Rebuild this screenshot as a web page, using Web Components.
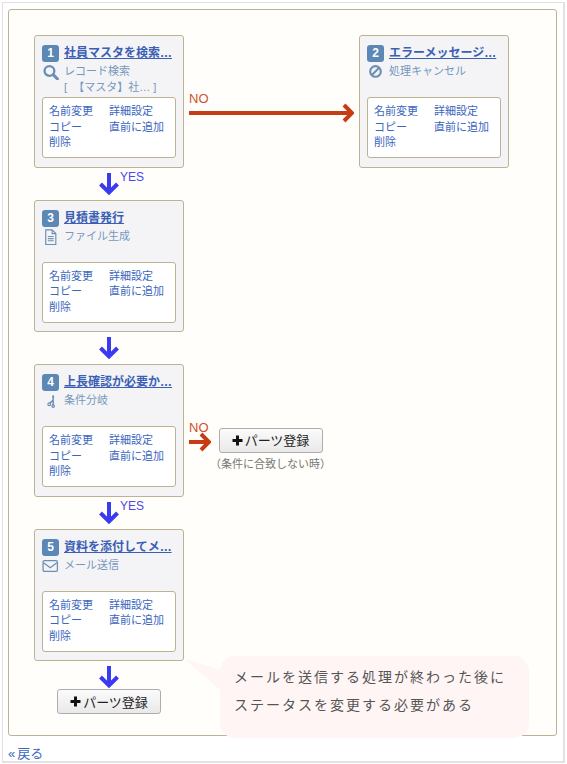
<!DOCTYPE html>
<html lang="ja">
<head>
<meta charset="utf-8">
<style>
html,body{margin:0;padding:0;background:#fff}
body{font-family:"Liberation Sans","Noto Sans CJK JP",sans-serif;font-size:12px;color:#333}
</style>
</head>
<body>
<flow-page>
  <flow-row>
    <flow-card num="1" icon="search">
      <span slot="title">社員マスタを検索…</span>
      <span slot="kind">レコード検索</span>
      <span slot="detail">[&nbsp;&nbsp;【マスタ】社…&nbsp;]</span>
    </flow-card>
    <flow-branch wide></flow-branch>
    <flow-card num="2" icon="ban">
      <span slot="title">エラーメッセージ…</span>
      <span slot="kind">処理キャンセル</span>
    </flow-card>
  </flow-row>
  <flow-down label="YES"></flow-down>
  <flow-row>
    <flow-card num="3" icon="file">
      <span slot="title">見積書発行</span>
      <span slot="kind">ファイル生成</span>
    </flow-card>
  </flow-row>
  <flow-down></flow-down>
  <flow-row>
    <flow-card num="4" icon="fork">
      <span slot="title">上長確認が必要か…</span>
      <span slot="kind">条件分岐</span>
    </flow-card>
    <flow-branch>
      <div class="else"><add-button></add-button><span>（条件に合致しない時）</span></div>
    </flow-branch>
  </flow-row>
  <flow-down label="YES"></flow-down>
  <flow-row>
    <flow-card num="5" icon="mail">
      <span slot="title">資料を添付してメ…</span>
      <span slot="kind">メール送信</span>
    </flow-card>
  </flow-row>
  <flow-down></flow-down>
  <flow-row class="last"><add-button></add-button></flow-row>
  <flow-note>メールを送信する処理が終わった後に<br>ステータスを変更する必要がある</flow-note>
  <a slot="back" href="#"><span style="margin-right:2px">«</span>戻る</a>
</flow-page>

<script>
const icons = {
  search: '<circle cx="7" cy="6.5" r="4.6" fill="none" stroke="#6b8fb5" stroke-width="2.2"/><path d="M10.5 10l4 4" stroke="#6b8fb5" stroke-width="2.8" stroke-linecap="round"/>',
  ban: '<circle cx="8" cy="7" r="5" fill="none" stroke="#6b8fb5" stroke-width="2"/><path d="M4.6 10.4l6.8-6.8" stroke="#6b8fb5" stroke-width="2"/>',
  file: '<path d="M3.5 .8h6l3.5 3.5v10.4h-9.5z" fill="none" stroke="#6b8fb5" stroke-width="1.1"/><path d="M9.5 .8v3.5h3.5M5.5 7h5.5M5.5 9h5.5M5.5 11h5.5" fill="none" stroke="#6b8fb5" stroke-width="1"/>',
  fork: '<path d="M10.5 3.5v8M10.5 6.5L7.5 9.5" fill="none" stroke="#6b8fb5" stroke-width="1.4"/><circle cx="10.5" cy="3.2" r="1" fill="#6b8fb5"/><circle cx="6.8" cy="10.5" r="1.3" fill="none" stroke="#6b8fb5" stroke-width="1.1"/><circle cx="10.5" cy="12.3" r="1.2" fill="none" stroke="#6b8fb5" stroke-width="1.1"/>',
  mail: '<rect x="1" y="2.5" width="13.5" height="10" rx="1.2" fill="none" stroke="#6b8fb5" stroke-width="1.2"/><path d="M1.5 4.5l6.2 4.6 6.3-4.6" fill="none" stroke="#6b8fb5" stroke-width="1.2"/>'
}

class FlowPage extends HTMLElement {
  constructor() {
    super()
    this.attachShadow({ mode: 'open' })
    this.shadowRoot.innerHTML = `
      <style>
        :host{display:block;box-sizing:border-box;width:563px;height:761px;margin:2px 0 0 2px;border:2px solid #e2e2e2;border-left-width:1px;border-top-width:1px;position:relative}
        .panel{box-sizing:border-box;width:549px;height:727px;margin:6px 0 0 5px;padding:25.3px 25px 0;background:#fffefa;border:1px solid #bdb393;border-radius:3px;display:flex;flex-direction:column}
        .back{margin:9px 0 0 5px;font-size:13px;line-height:18px}
        ::slotted(a){color:#3b66bd;text-decoration:none}
      </style>
      <div class="panel"><slot></slot></div>
      <div class="back"><slot name="back"></slot></div>`
  }
}

class FlowRow extends HTMLElement {
  constructor() {
    super()
    this.attachShadow({ mode: 'open' })
    this.shadowRoot.innerHTML = `
      <style>
        :host{display:flex;align-items:flex-start}
        :host(.last){width:150px;justify-content:center;margin-top:-4px}
      </style><slot></slot>`
  }
}

class FlowCard extends HTMLElement {
  constructor() {
    super()
    this.attachShadow({ mode: 'open' })
    const icon = icons[this.getAttribute('icon')]
    this.shadowRoot.innerHTML = `
      <style>
        :host{display:block;box-sizing:border-box;flex:none;width:150px;height:132.5px;padding:9px 7px 0;background:#f4f4f6;border:1px solid #bdb393;border-radius:3px}
        .head{display:flex;align-items:center;gap:5px;height:17px}
        .num{width:17px;height:17px;border-radius:3px;background:#5b88b5;color:#fff;font-weight:bold;font-size:12px;line-height:17px;text-align:center}
        .title{color:#3b5fb5;font-weight:bold;text-decoration:underline;white-space:nowrap;line-height:17px}
        .kind{display:flex;gap:5px;color:#7598bd;line-height:16px;height:34px;margin-top:1px;font-size:11px;white-space:nowrap}
        svg{flex:none;width:17px;height:16px;margin-top:1px}
        .detail{display:block}
        .ops{box-sizing:border-box;height:61px;padding:6px 6px 0;background:#fff;border:1px solid #bdb393;border-radius:3px;display:grid;grid-template-columns:60px 1fr;grid-auto-rows:15.5px;color:#3b66bd;font-size:11px;line-height:15.5px;white-space:nowrap}
      </style>
      <div class="head"><div class="num">${this.getAttribute('num')}</div><div class="title"><slot name="title"></slot></div></div>
      <div class="kind"><svg viewBox="0 0 16 15">${icon}</svg><div><slot name="kind"></slot><span class="detail"><slot name="detail"></slot></span></div></div>
      <div class="ops"><span>名前変更</span><span>詳細設定</span><span>コピー</span><span>直前に追加</span><span>削除</span></div>`
  }
}

class FlowDown extends HTMLElement {
  constructor() {
    super()
    this.attachShadow({ mode: 'open' })
    const label = this.getAttribute('label') || ''
    this.shadowRoot.innerHTML = `
      <style>
        :host{display:flex;width:150px;height:32px;position:relative;justify-content:center;align-items:flex-start}
        svg{width:22px;height:24px;margin-top:4px}
        span{position:absolute;left:86px;top:2px;color:#4a4ae6;font-size:12px;line-height:15px}
      </style>
      <svg viewBox="0 0 22 24"><path d="M11 1v19" stroke="#3a3af0" stroke-width="4" fill="none"/><path d="M2.5 12l8.5 8.5 8.5-8.5" stroke="#3a3af0" stroke-width="4" fill="none"/></svg>
      <span>${label}</span>`
  }
}

class FlowBranch extends HTMLElement {
  constructor() {
    super()
    this.attachShadow({ mode: 'open' })
    const w = this.hasAttribute('wide') ? 165 : 22
    this.shadowRoot.innerHTML = `
      <style>
        :host{display:flex;flex:none;align-items:flex-start;margin-left:5px}
        :host([wide]){margin-right:5px}
        .arrow{margin-top:56px;color:#d0502c;font-size:13px;line-height:15px;height:38px}
        svg{display:block;margin-top:-3px}
        ::slotted(.else){display:flex;flex-direction:column;align-items:center;margin:64px 0 0 -1px;font-size:11px;color:#777;line-height:15px;gap:4px}
      </style>
      <div class="arrow">NO<svg width="${w}" height="20" viewBox="0 0 ${w} 20"><path d="M0 10H${w - 3}" stroke="#c63c14" stroke-width="4" fill="none"/><path d="M${w - 10} 2l8 8-8 8" stroke="#c63c14" stroke-width="4" fill="none"/></svg></div>
      <slot></slot>`
  }
}

class AddButton extends HTMLElement {
  constructor() {
    super()
    this.attachShadow({ mode: 'open' })
    this.shadowRoot.innerHTML = `
      <style>
        :host{display:inline-flex;box-sizing:border-box;width:104px;height:25px;align-items:center;justify-content:center;gap:2px;border:1px solid #adadad;border-radius:3px;background:linear-gradient(#fbfbfb,#e9e9e9);color:#222;font-size:13px;white-space:nowrap}
        svg{width:11px;height:11px}
      </style>
      <svg viewBox="0 0 11 11"><path d="M5.5 .5v10M.5 5.5h10" stroke="#111" stroke-width="3"/></svg><span>パーツ登録</span>`
  }
}

class FlowNote extends HTMLElement {
  constructor() {
    super()
    this.attachShadow({ mode: 'open' })
    this.shadowRoot.innerHTML = `
      <style>
        :host{display:block;position:absolute;left:217px;top:653px;box-sizing:border-box;width:309px;height:81.5px;padding:8px 14px;background:#fff5f5;border-radius:15px;color:#555;font-size:14px;line-height:27.5px;letter-spacing:2px;white-space:nowrap}
        svg{position:absolute;left:-36px;top:3px}
      </style>
      <svg width="38" height="34" viewBox="0 0 38 34"><path d="M1 0L38 11V31H36Z" fill="#fff5f5"/></svg><slot></slot>`
  }
}

customElements.define('flow-page', FlowPage)
customElements.define('flow-row', FlowRow)
customElements.define('flow-card', FlowCard)
customElements.define('flow-down', FlowDown)
customElements.define('flow-branch', FlowBranch)
customElements.define('add-button', AddButton)
customElements.define('flow-note', FlowNote)
</script>
</body>
</html>
